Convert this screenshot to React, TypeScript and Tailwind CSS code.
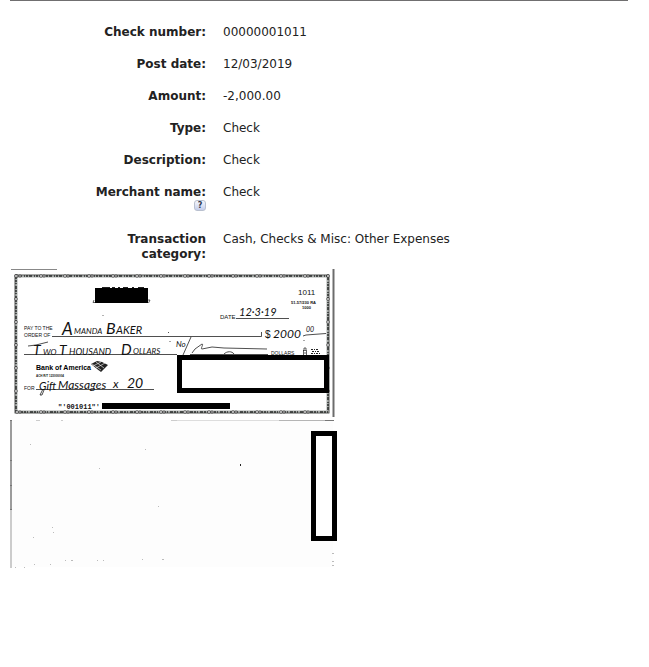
import type { ReactNode } from "react";

function Row({ label, value, help }: { label: string; value: string; help?: ReactNode }) {
  return (
    <div className="flex gap-[17px]">
      <dt className="w-[118px] shrink-0 text-right font-bold">
        {label}
        {help}
      </dt>
      <dd>{value}</dd>
    </div>
  );
}

function HelpButton() {
  return (
    <button
      type="button"
      aria-label="Help with merchant name"
      className="mb-1 ml-auto flex h-[11px] w-3 items-center justify-center rounded-[3px] border border-[#b9c0cf] bg-linear-to-b from-[#f7f8fd] to-[#c3cdeb] text-[8px] leading-none font-bold text-[#303a50]"
    >
      ?
    </button>
  );
}

function CheckFront() {
  const loopsX = Array.from({ length: 13 }, (_, i) => 17 + i * 24);
  const loopsY = Array.from({ length: 6 }, (_, i) => 276 + i * 23);
  return (
    <svg
      role="img"
      aria-label="Front of check 1011"
      viewBox="10 269 328 150"
      className="block h-[150px] w-[328px]"
      fill="none"
      stroke="#222"
      fontFamily="'Liberation Sans', sans-serif"
    >
      <path d="M11 269.5H57" stroke="#888" />
      <path d="M333.5 269V417" stroke="#6c6c6c" strokeWidth="2" />
      <rect x="16" y="276" width="312" height="136" stroke="#a9adab" strokeWidth="3" />
      <rect x="16" y="276" width="312" height="136" strokeWidth="2" stroke="#4a4d4b" strokeDasharray="2 1 3 2 1 1" />
      <rect x="15" y="275" width="314" height="138" strokeWidth="0.5" />
      {loopsX.map((x) => (
        <g key={x} strokeWidth="0.7" fill="#fff">
          <ellipse cx={x} cy="276" rx="1.6" ry="1.2" />
          <ellipse cx={x + 3} cy="276" rx="1.4" ry="1" />
          <ellipse cx={x} cy="412" rx="1.6" ry="1.2" />
          <ellipse cx={x + 3} cy="412" rx="1.4" ry="1" />
        </g>
      ))}
      {loopsY.map((y) => (
        <g key={y} strokeWidth="0.7" fill="#fff">
          <ellipse cx="16" cy={y} rx="1.2" ry="1.6" />
          <ellipse cx="328" cy={y} rx="1.2" ry="1.6" />
        </g>
      ))}

      <rect x="95" y="288" width="53" height="15" fill="#000" stroke="none" />
      <path d="M102 287.5h8m2 0h3m3 0h2m3 0h5m4 0h2m4 0h6" strokeWidth="1" />
      <path d="M94 300l-1 2.500h2M148 300h2l-1.500 3M102.500 315.500h1" strokeWidth="0.7" />

      <g fill="#111" stroke="none">
        <text x="298" y="295" fontSize="8">1011</text>
        <text x="291" y="304" fontSize="4" fontWeight="bold">51-57/230 RA</text>
        <text x="302" y="309" fontSize="4" fontWeight="bold">1000</text>
        <text x="220" y="319" fontSize="6">DATE</text>
        <text x="24" y="330" fontSize="5">PAY TO THE</text>
        <text x="24" y="337" fontSize="5">ORDER OF</text>
        <text x="271" y="355" fontSize="5">DOLLARS</text>
        <text x="36" y="370" fontSize="7" fontWeight="bold" fill="#000">Bank of America</text>
        <text x="36" y="377" fontSize="3" fontWeight="bold">ACH R/T 123000004</text>
        <text x="24" y="390" fontSize="5">FOR</text>
        <text x="58" y="409" fontSize="7" fontWeight="bold" fontFamily="'Liberation Mono', monospace">"'001011"'</text>
        <text x="265" y="338" fontSize="10">$</text>
      </g>

      <path d="M236 318.500H289M52 336.500H261.500V332M24 354.500H177M36 389.500H154M303 336l3-1 20-1.500M190 354.500H268" strokeWidth="0.8" />

      <g fill="#111" stroke="none" fontStyle="italic" fontFamily="Lato, 'Open Sans', sans-serif">
        <text x="239" y="316" fontSize="11">12·3·19</text>
        <text x="62" y="335" fontSize="17">A</text>
        <text x="74" y="334" fontSize="8">MANDA</text>
        <text x="106" y="334" fontSize="16">B</text>
        <text x="116" y="334" fontSize="11">AKER</text>
        <text x="273" y="338" fontSize="12">2000</text>
        <text x="306" y="332" fontSize="7">00</text>
        <text x="33" y="355" fontSize="14">T</text>
        <text x="43" y="355" fontSize="8">WO</text>
        <text x="59" y="355" fontSize="14">T</text>
        <text x="69" y="355" fontSize="9">HOUSAND</text>
        <text x="121" y="355" fontSize="15">D</text>
        <text x="133" y="354" fontSize="8">OLLARS</text>
        <text x="176" y="347" fontSize="8">No</text>
        <text x="39" y="390" fontSize="11">Gift</text>
        <text x="58" y="389" fontSize="12">Massages</text>
        <text x="113" y="388" fontSize="12">x</text>
        <text x="127" y="388" fontSize="14">20</text>
      </g>
      <path d="M191 337l-8 18M192 353l3-4 7-5c2 0-2 5 0 5l10-2 12 1 43 1M224 354c3-3 8-3 10 0M43 389l-3 6 2 0 2-5" strokeWidth="0.8" />
      <path d="M28 346l8-1 12-3M170 341v1M303.500 340l1 1M168 332.500h1" strokeWidth="0.8" />

      <path d="M91 364l6-3 5 1 6 3-7 7-4-3z" fill="#222" stroke="none" />
      <path d="M93 366l8-4M96 368l9-5M92 364l9 6M96 362l8 6" stroke="#fff" strokeWidth="0.6" />
      <rect x="303.500" y="350.500" width="3" height="5" strokeWidth="0.7" />
      <path d="M304 350v-2h2v2M305 352v2" strokeWidth="0.7" />
      <path d="M311 349.500h8M312 351.500h8M311 353.500h9M313 355.500h7" strokeWidth="1" strokeDasharray="2 1 1 1" />

      <rect x="179.500" y="357.500" width="147" height="33" fill="#fff" stroke="#000" strokeWidth="5" />
      <rect x="102" y="403" width="128" height="6" fill="#000" stroke="none" />
    </svg>
  );
}

function CheckBack() {
  return (
    <svg
      role="img"
      aria-label="Back of check 1011"
      viewBox="10 419 328 150"
      className="block h-[150px] w-[328px]"
      fill="none"
    >
      <rect x="11" y="420" width="322" height="147" fill="#fdfdfd" />
      <path d="M11 420V510" stroke="#9c9c9c" strokeWidth="2" />
      <path d="M11 510V568" stroke="#ccc" strokeWidth="2" />
      <path d="M10 420.500h2M10 460.500h2M10 485.500h2M10 509.500h2" stroke="#777" />
      <path d="M36 420.500h4M61 420.500h2M171 420.500h6" stroke="#ccc" />
      <path d="M177 420.500h102" stroke="#ddd" />
      <path d="M279 420.500h46" stroke="#b5b5b5" />
      <path d="M325 420.500h9" stroke="#777" />
      <path d="M240.500 464v2" stroke="#222" />
      <path
        d="M145 449.500h1M99 468.500h1M30 444.500h1M158 506.500h1M52 527.500h1M53 532.500h1M33 537.500h1M65 560.500h1M71 560.500h2M97 560.500h1M103 560.500h1M142 559.500h1M162 559.500h2M50 564.500h1M34 564.500h1M15 567.500h1M24 567.500h1M332 553.500h2M332 561.500h2M332 565.500h2"
        stroke="#bbb"
      />
      <rect x="313.500" y="433.500" width="21" height="105" fill="#fff" stroke="#000" strokeWidth="5" />
    </svg>
  );
}

export default function App() {
  return (
    <main className="bg-white pr-[21px] pb-12 pl-[10px] font-['DejaVu_Sans',Verdana,sans-serif] text-[12px] leading-[15px] text-[#222]">
      <hr className="border-t border-[#706f70]" />
      <dl className="mt-6 ml-[78px] flex flex-col gap-[17px]">
        <Row label="Check number:" value="00000001011" />
        <Row label="Post date:" value="12/03/2019" />
        <Row label="Amount:" value="-2,000.00" />
        <Row label="Type:" value="Check" />
        <Row label="Description:" value="Check" />
        <Row label="Merchant name:" value="Check" help={<HelpButton />} />
        <Row label="Transaction category:" value="Cash, Checks & Misc: Other Expenses" />
      </dl>
      <div className="mt-[7px]">
        <CheckFront />
        <CheckBack />
      </div>
    </main>
  );
}
